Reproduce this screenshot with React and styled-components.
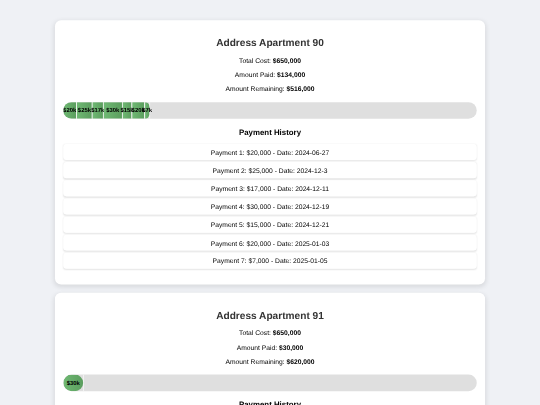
import React from 'react';
import styled, { createGlobalStyle } from 'styled-components';

const GlobalStyle = createGlobalStyle`
  * { box-sizing: border-box; }
  html, body { margin: 0; height: 405px; overflow: hidden; }
  body {
    background: #eff1f5;
    font-family: "Liberation Sans", Arial, sans-serif;
    text-rendering: geometricPrecision;
    color: #000;
  }
`;

const Viewport = styled.div`
  width: 540px;
  height: 405px;
  overflow: hidden;
`;

/* The page is laid out for a 1306px desktop width and shown reduced. */
const Page = styled.main`
  display: flex;
  flex-direction: column;
  align-items: center;
  gap: 20px;
  width: 1306px;
  height: 980px;
  padding-top: 48.6px;
  overflow: hidden;
  font-size: 16.3px;
  transform: scale(0.41348);
  transform-origin: 0 0;
`;

const Card = styled.section`
  flex: none;
  width: 1040px;
  padding: 20px 20px 37.5px;
  border-radius: 15px;
  background: #fff;
  box-shadow: 0 4px 12px rgba(0, 0, 0, 0.1);
  text-align: center;
`;

const Title = styled.h2`
  margin: 21.8px 0 0;
  font-size: 24.5px;
  line-height: 28px;
  color: #333;
`;

const Stats = styled.div`
  padding-top: 11.8px;
`;

const Stat = styled.p`
  margin: 0;
  line-height: 34.6px;
`;

const Bar = styled.div`
  display: flex;
  height: 40px;
  margin-top: 12.6px;
  border-radius: 20px;
  background: #dfdfdf;
  overflow: hidden;
`;

const Segment = styled.div`
  display: flex;
  flex: none;
  align-items: center;
  justify-content: center;
  width: ${({ $share }) => $share}%;
  z-index: ${({ $last }) => ($last ? 1 : 0)};
  border-right: ${({ $last }) => ($last ? 'none' : '2px solid #fff')};
  border-radius: ${({ $last }) => ($last ? '0 20px 20px 0' : '0')};
  background: linear-gradient(90deg, #6fb873, #5b9e5e);
  font-size: 14.3px;
  font-weight: bold;
  white-space: nowrap;

  &:first-child { width: calc(${({ $share }) => $share}% + 2.2px); }
  &:first-child:nth-last-child(2) { border-radius: 24px; }
`;

const BarDivider = styled.div`
  flex: none;
  width: 2px;
  background: #f4f4f4;
`;

const Subtitle = styled.h3`
  margin: 22px 0 16.5px;
  font-size: 19px;
  line-height: 23px;
`;

const List = styled.ul`
  display: grid;
  gap: 5px;
  margin: 0;
  padding: 0;
  list-style: none;
`;

const Item = styled.li`
  height: 38.9px;
  border-radius: 8px;
  background: #fff;
  box-shadow: 0 2px 4px rgba(0, 0, 0, 0.1);
  line-height: 43px;
`;

const apartments = [
  {
    number: 90,
    payments: [
      [20000, '2024-06-27'],
      [25000, '2024-12-3'],
      [17000, '2024-12-11'],
      [30000, '2024-12-19'],
      [15000, '2024-12-21'],
      [20000, '2025-01-03'],
      [7000, '2025-01-05'],
    ],
  },
  { number: 91, payments: [[30000, '2024-12-19']] },
];

const TOTAL = 650000;
const money = (n) => '$' + n.toLocaleString('en-US');

function Apartment({ number, payments }) {
  const paid = payments.reduce((sum, [amount]) => sum + amount, 0);
  return (
    <Card>
      <Title>Address Apartment {number}</Title>
      <Stats>
        <Stat>Total Cost: <b>{money(TOTAL)}</b></Stat>
        <Stat>Amount Paid: <b>{money(paid)}</b></Stat>
        <Stat>Amount Remaining: <b>{money(TOTAL - paid)}</b></Stat>
      </Stats>
      <Bar>
        {payments.map(([amount], i) => (
          <Segment key={i} $share={(amount / TOTAL) * 100} $last={i === payments.length - 1}>
            ${amount / 1000}k
          </Segment>
        ))}
        <BarDivider />
      </Bar>
      <Subtitle>Payment History</Subtitle>
      {number === 90 && (
        <List>
          {payments.map(([amount, date], i) => (
            <Item key={i}>Payment {i + 1}: {money(amount)} - Date: {date}</Item>
          ))}
        </List>
      )}
    </Card>
  );
}

export default function App() {
  return (
    <>
      <GlobalStyle />
      <Viewport>
        <Page>
          {apartments.map((a) => <Apartment key={a.number} {...a} />)}
        </Page>
      </Viewport>
    </>
  );
}
